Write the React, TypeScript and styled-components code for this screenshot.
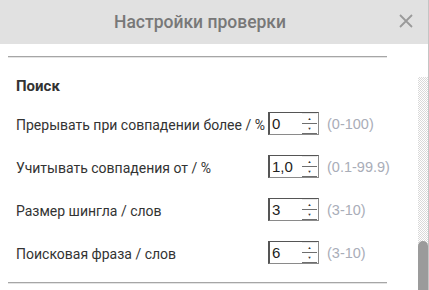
import * as React from "react"
import styled, { createGlobalStyle } from "styled-components"

const GlobalStyle = createGlobalStyle`
    html, body {
        margin: 0;
        padding: 0;
        background: #ffffff;
    }
    body {
        font-family: Roboto, "Liberation Sans", Arial, sans-serif;
    }
`

interface IField {
    label: string
    value: string
    range: string
}

const FIELDS: IField[] = [
    { label: "Прерывать при совпадении более / %", value: "0", range: "(0-100)" },
    { label: "Учитывать совпадения от / %", value: "1,0", range: "(0.1-99.9)" },
    { label: "Размер шингла / слов", value: "3", range: "(3-10)" },
    { label: "Поисковая фраза / слов", value: "6", range: "(3-10)" },
]

const Dialog = styled.div`
    width: 429px;
    height: 290px;
    box-sizing: border-box;
    border-right: 1px solid #c4c4c4;
    display: flex;
    flex-direction: column;
    overflow: hidden;
    background: #ffffff;
`

const Header = styled.div`
    height: 44px;
    flex: 0 0 auto;
    background: #e1e1e1;
    display: flex;
    align-items: center;
    justify-content: center;
    position: relative;
`

const Title = styled.div`
    font-size: 17.5px;
    font-weight: 500;
    color: #787878;
    margin-right: 28px;
    margin-top: -1px;
    white-space: nowrap;
`

const CloseButton = styled.div`
    position: absolute;
    right: 15px;
    top: 14px;
    width: 14px;
    height: 14px;
    display: flex;
`

const Body = styled.div`
    flex: 1 1 auto;
    display: flex;
    flex-direction: row;
    min-height: 0;
`

const Content = styled.div`
    flex: 1 1 auto;
    min-width: 0;
    padding: 12px 31px 0 8px;
`

const Rule = styled.div`
    height: 1px;
    background: #a6a6a6;
    border-bottom: 1px solid #e4e4e4;
`

const SectionTitle = styled.div`
    font-size: 15px;
    font-weight: bold;
    color: #333333;
    line-height: 20px;
    margin: 18px 0 7px 8px;
`

const Row = styled.div`
    height: 43px;
    display: flex;
    align-items: center;
    padding-left: 8px;
`

const Label = styled.div`
    width: 252px;
    flex: 0 0 auto;
    font-size: 14px;
    color: #333333;
    white-space: nowrap;
`

const Spinner = styled.div`
    width: 51px;
    height: 23px;
    flex: 0 0 auto;
    box-sizing: border-box;
    border: 1px solid #8a8a8a;
    border-top-color: #555555;
    border-left: 2px solid #555555;
    display: flex;
    flex-direction: row;
    margin-top: -2px;
`

const SpinnerValue = styled.div`
    flex: 1 1 auto;
    font-family: "Liberation Sans", Arial, sans-serif;
    font-size: 15px;
    color: #222222;
    padding-left: 2px;
    line-height: 21px;
`

const SpinnerButtons = styled.div`
    width: 15px;
    margin-right: 1px;
    display: flex;
    flex-direction: column;
    justify-content: center;
`

const SpinButton = styled.div<{ $up?: boolean }>`
    height: 9px;
    border-bottom: 1px solid #6e6e6e;
    border-top: ${p => (p.$up ? "1px solid #e8e8e8" : "none")};
    display: flex;
    align-items: center;
    justify-content: center;
    font-size: 4px;
    line-height: 4px;
    color: #333333;
`

const Range = styled.div`
    font-family: "Liberation Sans", Arial, sans-serif;
    font-size: 14.5px;
    color: #a9adb8;
    margin-left: 8px;
    margin-top: -1px;
    white-space: nowrap;
`

const ScrollRail = styled.div`
    width: 10px;
    flex: 0 0 auto;
    padding-top: 33px;
    display: flex;
    flex-direction: column;
`

const ScrollTrack = styled.div`
    flex: 1 1 auto;
    display: flex;
    flex-direction: column;
    justify-content: flex-end;
    background: repeating-conic-gradient(#d9d9d9 0 25%, #ffffff 0 50%) 0 0 / 2px 2px;
`

const ScrollThumb = styled.div`
    height: 49px;
    background: #9b9b9b;
    border-radius: 5px 5px 0 0;
`

const SectionBottom = styled.div`
    margin-top: 7px;
`

const CloseIcon = () => (
    <svg width="14" height="14" viewBox="0 0 14 14">
        <path d="M1 1 L13 13 M13 1 L1 13" stroke="#9a9a9a" strokeWidth="1.8" fill="none" />
    </svg>
)

const NumberField = ({ value }: { value: string }) => (
    <Spinner>
        <SpinnerValue>{value}</SpinnerValue>
        <SpinnerButtons>
            <SpinButton $up>▲</SpinButton>
            <SpinButton>▼</SpinButton>
        </SpinnerButtons>
    </Spinner>
)

export default function App(): JSX.Element {
    return (
        <>
            <GlobalStyle />
            <Dialog>
                <Header>
                    <Title>Настройки проверки</Title>
                    <CloseButton>
                        <CloseIcon />
                    </CloseButton>
                </Header>
                <Body>
                    <Content>
                        <Rule />
                        <SectionTitle>Поиск</SectionTitle>
                        {FIELDS.map(f => (
                            <Row key={f.label}>
                                <Label>{f.label}</Label>
                                <NumberField value={f.value} />
                                <Range>{f.range}</Range>
                            </Row>
                        ))}
                        <SectionBottom>
                            <Rule />
                        </SectionBottom>
                    </Content>
                    <ScrollRail>
                        <ScrollTrack>
                            <ScrollThumb />
                        </ScrollTrack>
                    </ScrollRail>
                </Body>
            </Dialog>
        </>
    )
}
